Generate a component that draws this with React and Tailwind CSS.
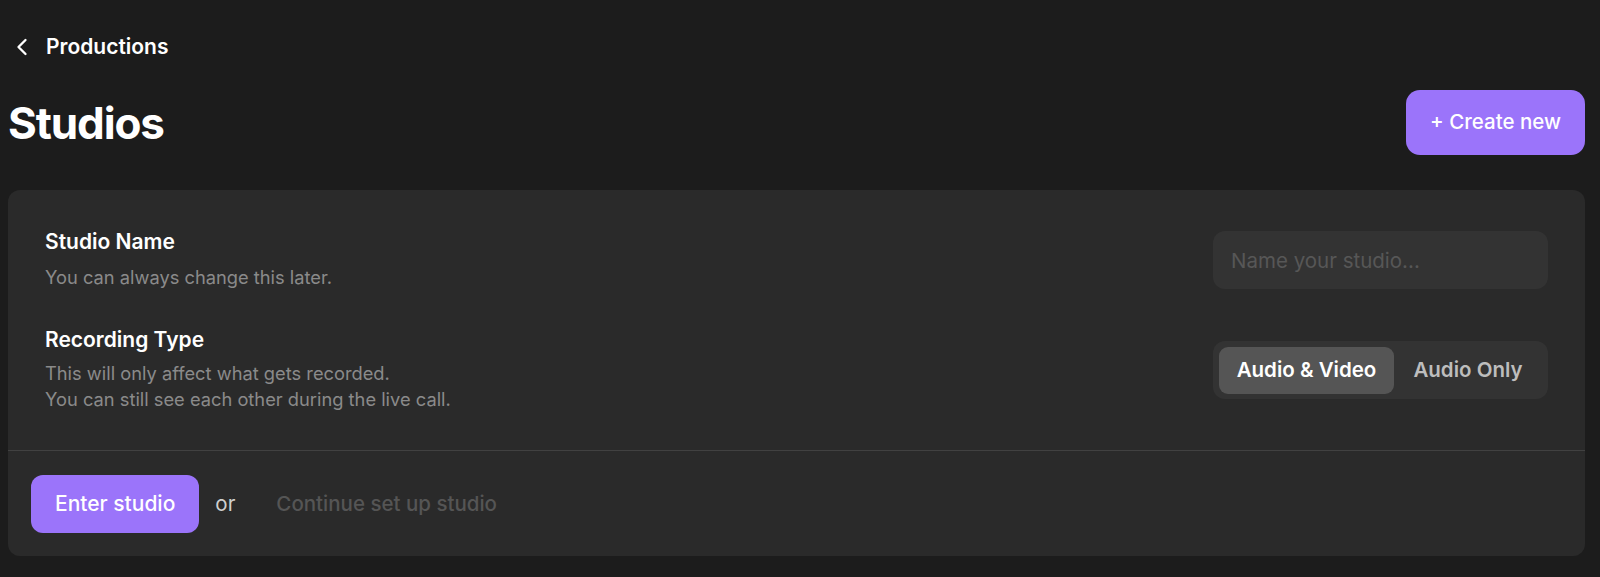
import React, { useState } from 'react';
import { ChevronLeft } from 'lucide-react';

const App = () => {
  const [type, setType] = useState('av');

  return (
    <div className="min-h-screen bg-[#1c1c1c] pl-2 pr-[15px] pt-[33px] font-['Inter',sans-serif] text-white">
      {/* Back link */}
      <div className="flex h-7 items-center gap-[10px]">
        <ChevronLeft size={28} strokeWidth={2} className="text-white" />
        <span className="text-[21px] font-semibold">Productions</span>
      </div>

      {/* Title row */}
      <div className="mt-[29px] flex items-center justify-between">
        <h1 className="text-[44px] font-bold leading-none tracking-tight">Studios</h1>
        <button className="h-[65px] w-[179px] rounded-[14px] bg-[#9b74fa] text-[20.5px] font-medium text-white">
          + Create new
        </button>
      </div>

      {/* Card */}
      <div className="mt-[35px] rounded-xl bg-[#2a2a2a]">
        <div className="flex flex-col gap-[38px] pb-[38px] pl-[37px] pr-[37px] pt-10">
          <div className="flex items-center justify-between">
            <div>
              <div className="text-[21px] font-semibold leading-6">Studio Name</div>
              <div className="mt-[10px] text-[18.3px] leading-[26px] text-[#8a8a8a]">
                You can always change this later.
              </div>
            </div>
            <input
              placeholder="Name your studio..."
              className="h-[58px] w-[335px] rounded-xl bg-[#333333] px-[18px] text-[20.5px] text-white outline-none placeholder:text-[#575757]"
            />
          </div>

          <div className="flex items-center justify-between">
            <div>
              <div className="text-[21px] font-semibold leading-6">Recording Type</div>
              <div className="mt-[8px] text-[18.3px] leading-[26px] text-[#8a8a8a]">
                This will only affect what gets recorded.
                <br />
                You can still see each other during the live call.
              </div>
            </div>
            <div className="flex h-[58px] w-[335px] items-center rounded-xl bg-[#333333] p-[6px]">
              <button
                onClick={() => setType('av')}
                className={`h-[47px] w-[175px] rounded-[9px] text-[20.5px] font-semibold ${
                  type === 'av' ? 'bg-[#555555] text-white' : 'text-[#bdbdbd]'
                }`}
              >
                Audio &amp; Video
              </button>
              <button
                onClick={() => setType('audio')}
                className={`h-[47px] flex-1 rounded-[9px] text-[20.5px] font-semibold ${
                  type === 'audio' ? 'bg-[#555555] text-white' : 'text-[#bdbdbd]'
                }`}
              >
                Audio Only
              </button>
            </div>
          </div>
        </div>

        <div className="h-px bg-[#414141]" />

        {/* Footer */}
        <div className="flex items-center pb-[23px] pl-[23px] pt-[24px]">
          <button className="h-[58px] rounded-xl bg-[#9b74fa] px-[24px] text-[21px] font-medium text-white">
            Enter studio
          </button>
          <span className="ml-[16px] text-[20.5px] text-[#cfcfcf]">or</span>
          <button className="ml-[41px] text-[20.5px] font-medium text-[#555555]">
            Continue set up studio
          </button>
        </div>
      </div>
    </div>
  );
};

export default App;
